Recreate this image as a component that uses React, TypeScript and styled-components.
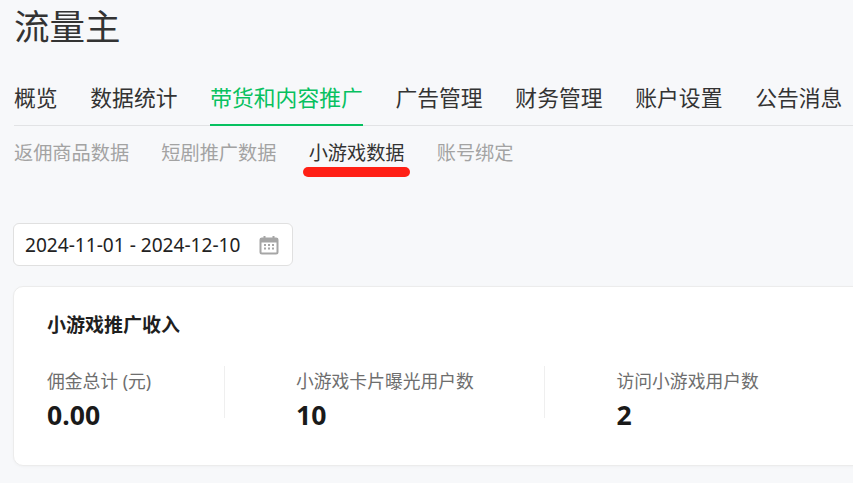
import React, { FC } from "react";
import styled, { createGlobalStyle } from "styled-components";

const GlobalStyle = createGlobalStyle`
  html, body {
    margin: 0;
    padding: 0;
    height: 100%;
    overflow: hidden;
    background: #f7f8fa;
  }
  body {
    font-family: "Noto Sans", "Noto Sans CJK SC", sans-serif;
  }
`;

const Page = styled.div`
  width: 853px;
  height: 483px;
  overflow: hidden;
  padding-left: 14px;
  box-sizing: border-box;
`;

const Title = styled.h1`
  margin: 0;
  height: 58px;
  font-size: 35.5px;
  line-height: 52px;
  font-weight: 400;
  color: #333;
  white-space: nowrap;
`;

const Tabs = styled.div`
  display: flex;
  gap: 32.7px;
  height: 68px;
  box-sizing: border-box;
  border-bottom: 1px solid #e2e3e5;
  white-space: nowrap;
`;

const Tab = styled.div<{ $active?: boolean }>`
  height: 68px;
  box-sizing: border-box;
  padding-top: 22px;
  font-size: 21.8px;
  line-height: 36px;
  color: ${(p) => (p.$active ? "#07c160" : "#333")};
  border-bottom: 2px solid ${(p) => (p.$active ? "#07c160" : "transparent")};
`;

const SubTabs = styled.div`
  display: flex;
  gap: 32.2px;
  height: 97px;
  padding-top: 11px;
  box-sizing: border-box;
  white-space: nowrap;
`;

const SubTab = styled.div<{ $active?: boolean }>`
  position: relative;
  font-size: 19.2px;
  line-height: 32px;
  height: 32px;
  color: ${(p) => (p.$active ? "#333" : "#a3a3a3")};
`;

const RedMark = styled.span`
  position: absolute;
  left: -6px;
  right: -5px;
  top: 30px;
  height: 10px;
  border-radius: 5px;
  background: #ff2015;
`;

const DateBox = styled.div`
  display: flex;
  align-items: center;
  justify-content: space-between;
  width: 280px;
  height: 43px;
  margin-left: -1px;
  padding: 0 13px 0 11px;
  box-sizing: border-box;
  background: #fff;
  border: 1px solid #e0e0e0;
  border-radius: 6px;
  font-size: 19.1px;
  line-height: 40px;
  color: #222;
  white-space: nowrap;
`;

const Card = styled.div`
  width: 900px;
  height: 180px;
  margin: 20px 0 0 -1px;
  padding: 25.5px 33px 0;
  box-sizing: border-box;
  background: #fff;
  border: 1px solid #ececec;
  border-radius: 10px;
  box-shadow: 0 1px 3px rgba(0, 0, 0, 0.03);
`;

const CardTitle = styled.div`
  font-size: 19px;
  line-height: 24px;
  font-weight: 700;
  color: #1f1f1f;
`;

const Stats = styled.div`
  display: flex;
  margin-top: 29px;
`;

const Stat = styled.div<{ $width: number; $last?: boolean }>`
  width: ${(p) => p.$width}px;
  flex: none;
  height: 52px;
  margin-right: 71.5px;
  border-right: ${(p) => (p.$last ? "none" : "1px solid #efefef")};
`;

const StatLabel = styled.div`
  font-size: 17.8px;
  line-height: 30px;
  color: #6e6e6e;
  white-space: nowrap;
`;

const StatValue = styled.div`
  margin-top: 1px;
  font-size: 26.6px;
  line-height: 36px;
  font-weight: 700;
  color: #1a1a1a;
`;

const CalendarIcon: FC = () => (
  <svg width="20" height="20" viewBox="0 0 20 20" fill="none">
    <rect x="1.5" y="3.5" width="17" height="15" rx="1.5" stroke="#a6a6a6" strokeWidth="2" />
    <rect x="1" y="3" width="18" height="4.5" fill="#a6a6a6" />
    <path d="M5.5 1v4M14.5 1v4" stroke="#a6a6a6" strokeWidth="2" />
    <path
      d="M5 10h2M9 10h2M13 10h2M5 13.5h2M9 13.5h2M13 13.5h2"
      stroke="#a6a6a6"
      strokeWidth="2"
    />
  </svg>
);

const tabs = ["概览", "数据统计", "带货和内容推广", "广告管理", "财务管理", "账户设置", "公告消息"];
const subTabs = ["返佣商品数据", "短剧推广数据", "小游戏数据", "账号绑定"];

const App: FC = () => (
  <Page>
    <GlobalStyle />
    <Title>流量主</Title>
    <Tabs>
      {tabs.map((t) => (
        <Tab key={t} $active={t === "带货和内容推广"}>
          {t}
        </Tab>
      ))}
    </Tabs>
    <SubTabs>
      {subTabs.map((t) => (
        <SubTab key={t} $active={t === "小游戏数据"}>
          {t}
          {t === "小游戏数据" && <RedMark />}
        </SubTab>
      ))}
    </SubTabs>
    <DateBox>
      2024-11-01 - 2024-12-10
      <CalendarIcon />
    </DateBox>
    <Card>
      <CardTitle>小游戏推广收入</CardTitle>
      <Stats>
        <Stat $width={176.5}>
          <StatLabel>佣金总计 (元)</StatLabel>
          <StatValue>0.00</StatValue>
        </Stat>
        <Stat $width={248}>
          <StatLabel>小游戏卡片曝光用户数</StatLabel>
          <StatValue>10</StatValue>
        </Stat>
        <Stat $width={200} $last>
          <StatLabel>访问小游戏用户数</StatLabel>
          <StatValue>2</StatValue>
        </Stat>
      </Stats>
    </Card>
  </Page>
);

export default App;
